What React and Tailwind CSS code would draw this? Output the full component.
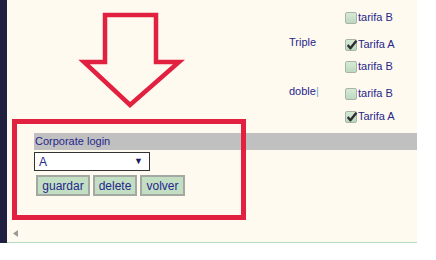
const navy = 'text-[#26268c]';

function Box({ checked }) {
  return (
    <span className="relative inline-block w-[12px] h-[12px] rounded-[2px] border border-[#a9b3a9] bg-gradient-to-b from-[#d6ead6] to-[#bcd9bf] mr-[1px]">
      {checked && (
        <svg viewBox="0 0 12 12" className="absolute -left-[1px] -top-[2px] w-[13px] h-[13px]">
          <path d="M2.5 6.5 L5 9.5 L10.5 2.5" fill="none" stroke="#2e2e2e" strokeWidth="2.2" strokeLinejoin="round" />
        </svg>
      )}
    </span>
  );
}

function Row({ label, text, checked, mt }) {
  return (
    <div className={`grid grid-cols-[58px_auto] items-center h-[13px] ${mt}`}>
      <span className="-mt-[5px] pl-[2px]">{label}</span>
      <span className="flex items-center">
        <Box checked={checked} />
        <span className="leading-none">{text}</span>
      </span>
    </div>
  );
}

export default function App() {
  return (
    <div
      className={`relative w-[436px] h-[260px] bg-white overflow-hidden text-[11px] ${navy}`}
      style={{ fontFamily: '"Liberation Sans", Arial, sans-serif' }}
    >
      <div className="flex h-[243px]">
        <div className="w-[7px] bg-[#1f2040]" />
        <div className="w-[410px] bg-[#fffaf0] border-b border-[#b6dbbd] flex flex-col">
          <div className="h-[133px] pl-[280px] pt-[11px]">
            <Row text="tarifa B" />
            <Row label="Triple" text="Tarifa A" checked mt="mt-[14px]" />
            <Row text="tarifa B" mt="mt-[9px]" />
            <Row label={<>doble<span className="text-[#6fa8dc] font-light">|</span></>} text="tarifa B" mt="mt-[14px]" />
            <Row text="Tarifa A" checked mt="mt-[10px]" />
          </div>
          <div className="ml-[27px] h-[17px] bg-[#c0c0c0] flex items-center pl-[1px] text-[11px]">
            Corporate login
          </div>
          <div className="ml-[27px] mt-[2px] w-[116px] h-[19px] border border-[#333] bg-white flex items-center justify-between pl-[4px] pr-[6px] text-[12px]">
            <span>A</span>
            <span className="text-[9px] text-[#1a1a5a]">▼</span>
          </div>
          <div className="ml-[29px] mt-[4px] flex gap-[3px] text-[12px]">
            <button className="w-[54px] h-[21px] bg-[#c2dfc4] border-2 border-[#a3a8a3] leading-none">guardar</button>
            <button className="w-[44px] h-[21px] bg-[#c2dfc4] border-2 border-[#a3a8a3] leading-none">delete</button>
            <button className="w-[45px] h-[21px] bg-[#c2dfc4] border-2 border-[#a3a8a3] leading-none">volver</button>
          </div>
          <div className="mt-auto mb-[5px] ml-[6px]">
            <svg width="5" height="7" viewBox="0 0 5 7">
              <path d="M5 0 L0 3.5 L5 7 Z" fill="#9a9a9a" />
            </svg>
          </div>
        </div>
      </div>

      <svg className="absolute left-0 top-0 pointer-events-none" width="436" height="260" viewBox="0 0 436 260">
        <polygon
          points="105,15 156,15 156,62 179,62 130,105 84,62 105,62"
          fill="none"
          stroke="#e2203f"
          strokeWidth="4.5"
          strokeLinejoin="miter"
        />
      </svg>
      <div className="absolute left-[12px] top-[119px] w-[234px] h-[101px] border-[5px] border-[#e2203f] pointer-events-none" />
    </div>
  );
}
